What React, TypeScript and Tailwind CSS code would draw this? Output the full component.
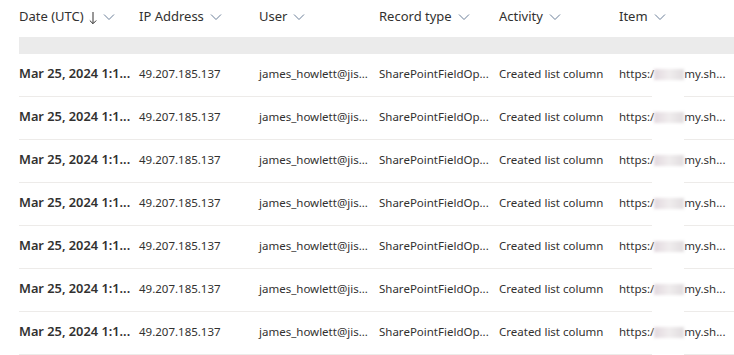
import React from 'react';

const columns = [
  { label: 'Date (UTC)', sorted: true },
  { label: 'IP Address' },
  { label: 'User' },
  { label: 'Record type' },
  { label: 'Activity' },
  { label: 'Item' },
];

const rows = Array.from({ length: 7 }, (_, i) => ({
  id: i,
  date: 'Mar 25, 2024 1:1...',
  ip: '49.207.185.137',
  user: 'james_howlett@jis...',
  recordType: 'SharePointFieldOp...',
  activity: 'Created list column',
}));

const Chevron = () => (
  <svg width="12" height="8" viewBox="0 0 12 8" className="ml-[6px] mt-[1px]">
    <path d="M1 1.5 L6 6.5 L11 1.5" fill="none" stroke="#6b7f99" strokeWidth="1" />
  </svg>
);

const App: React.FC = () => {
  return (
    <div
      className="w-[734px] h-[355px] bg-white overflow-hidden pl-[19px] text-[#323130]"
      style={{ fontFamily: '"Noto Sans", "Open Sans", sans-serif' }}
    >
      <div className="grid grid-cols-[120px_120px_120px_120px_120px_1fr] h-[37px] items-center">
        {columns.map((col) => (
          <div key={col.label} className="flex items-center text-[13px] pb-[4px]">
            <span>{col.label}</span>
            {col.sorted && (
              <svg width="8" height="14" viewBox="0 0 8 14" className="ml-[5px] mt-[2px]">
                <path d="M4 1 V12.5 M0.8 9.5 L4 12.7 L7.2 9.5" fill="none" stroke="#323130" strokeWidth="1" />
              </svg>
            )}
            <Chevron />
          </div>
        ))}
      </div>
      <div className="h-[17px] bg-[#ebebeb]" />
      {rows.map((row) => (
        <div
          key={row.id}
          className="grid grid-cols-[120px_120px_120px_120px_120px_1fr] h-[43px] items-center border-b border-[#edebe9] pb-[2px] text-[11.5px] whitespace-nowrap"
        >
          <div className="text-[12.8px] font-semibold text-[#323130]">{row.date}</div>
          <div>{row.ip}</div>
          <div>{row.user}</div>
          <div>{row.recordType}</div>
          <div>{row.activity}</div>
          <div className="relative h-full flex items-center">
            <span className="shrink-0">https:/</span>
            <span className="shrink-0 inline-block w-[30px] h-[11px] bg-gradient-to-r from-[#e2d8de] via-[#f0edee] to-[#e0dcde] blur-[1.5px]" />
            <span className="shrink-0">my.sh...</span>
            <span className="absolute left-[33px] bottom-[-3px] w-[32px] h-[3px] bg-white" />
          </div>
        </div>
      ))}
    </div>
  );
};

export default App;
